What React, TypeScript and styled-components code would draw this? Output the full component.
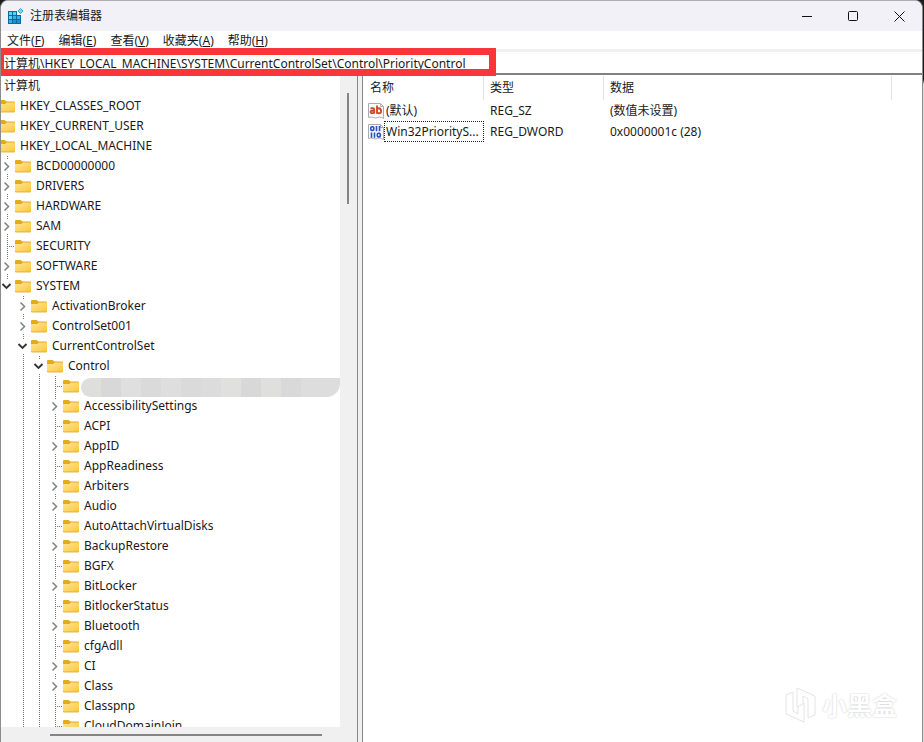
import React from "react";
import styled, { createGlobalStyle, css } from "styled-components";

const GlobalStyle = createGlobalStyle`
  * { box-sizing: border-box; }
  html, body { margin: 0; padding: 0; }
  body {
    background: linear-gradient(#1c1c1c 0 80px, #dcdcdc 84px);
    color: #1a1a1a;
    font-family: "Noto Sans", "Noto Sans CJK SC", sans-serif;
    font-size: 12px;
    line-height: 20px;
  }
  button, input { font: inherit; color: inherit; }
`;

const Window = styled.main`
  display: flex;
  flex-direction: column;
  height: 100vh;
  margin-right: 1px;
  overflow: hidden;
  background: #fff;
  border: 1px solid #8c8c8c;
  border-top-color: #b0aeb4;
  border-bottom: 0;
  border-radius: 8px 8px 0 0;
`;

const TitleBar = styled.header`
  display: flex;
  align-items: center;
  flex: 0 0 30px;
  padding-left: 6px;
  background: #f1f1f7;
`;

const Title = styled.h1`
  flex: 1;
  margin: 0 0 0 6px;
  font-size: 12px;
  font-weight: 400;
`;

const CaptionButton = styled.button`
  display: grid;
  place-items: center;
  width: 46px;
  height: 30px;
  padding: 0;
  border: 0;
  background: none;
`;

const MenuBar = styled.nav`
  display: flex;
  flex: 0 0 18px;
  min-height: 0;
  gap: 14px;
  padding-left: 6px;
`;

const MenuButton = styled.button`
  padding: 0;
  border: 0;
  background: none;
  line-height: 20px;
  white-space: nowrap;
`;

const AddressBar = styled.div`
  position: relative;
  flex: 0 0 26px;
  border-top: 3px solid #f0f0f0;
  border-bottom: 2px solid #828282;
`;

const AddressInput = styled.input`
  display: block;
  width: 100%;
  height: 21px;
  padding: 1px 3px 0;
  border: 0;
  outline: 0;
  background: #fff;
`;

const Highlight = styled.div`
  position: absolute;
  top: -4px;
  left: -4px;
  width: 499px;
  height: 28px;
  border: 7px solid #fa3638;
  pointer-events: none;
`;

const Panes = styled.div`
  display: grid;
  grid-template-columns: minmax(0, 356fr) 6px minmax(0, 559fr);
  flex: 1;
  min-height: 0;
`;

const TreePane = styled.section`
  display: grid;
  grid-template-columns: minmax(0, 1fr) 17px;
  grid-template-rows: minmax(0, 1fr) 15px;
  min-height: 0;
  background: #f0f0f0;
`;

const Tree = styled.ul`
  margin: 0;
  padding: 1px 0 0;
  overflow: hidden;
  list-style: none;
  background: #fff;
`;

const TreeRow = styled.li`
  display: flex;
  height: 20px;
  margin-left: -2px;
`;

const dots = css`
  background-image: repeating-linear-gradient(#777 0 1px, transparent 1px 2px);
  background-size: 1px 100%;
  background-position: 8px 0;
  background-repeat: no-repeat;
`;

const Guide = styled.span<{ $line?: boolean }>`
  flex: 0 0 16px;
  ${(p) => p.$line && dots}
`;

const Branch = styled(Guide)`
  display: flex;
  align-items: center;
  justify-content: flex-end;

  &::after {
    content: "";
    width: 7px;
    height: 1px;
    background: repeating-linear-gradient(90deg, transparent 0 1px, #777 1px 2px);
  }
`;

const Expander = styled.button<{ $last?: boolean }>`
  flex: 0 0 16px;
  display: flex;
  align-items: center;
  padding: 0;
  border: 0;
  background-color: transparent;
  ${dots}
  ${(p) => p.$last && css`background-size: 1px 50%;`}

  svg { background: #fff; }
`;

const NodeLabel = styled.span`
  margin-left: 5px;
  white-space: nowrap;
`;

const Redaction = styled.span`
  flex: 1;
  height: 19px;
  margin: 2px 0 0 2px;
  border-radius: 10px 0 14px 10px;
  background: linear-gradient(
    90deg,
    #dededd 0 20px, #d8d8d8 20px 40px, #dfdfdf 40px 60px, #dadada 60px 80px,
    #dedede 80px 100px, #dadada 100px 120px, #dcdcdc 120px 140px,
    #e0e0df 140px 160px, #d8d8d8 160px 180px, #dfdfde 180px 200px,
    #d9d9d9 200px 220px, #dddddd 220px
  );
`;

const VerticalScroll = styled.div`
  padding: 18px 0 0 7px;

  &::after {
    content: "";
    display: block;
    width: 2px;
    height: 111px;
    background: #858585;
  }
`;

const HorizontalScroll = styled.div`
  grid-column: 1 / -1;
  padding: 7px 35px 0 49px;

  &::after {
    content: "";
    display: block;
    height: 2px;
    background: #858585;
  }
`;

const Splitter = styled.div`
  border: solid #868686;
  border-width: 0 1px;
  background: #f0f0f0;
`;

const ListPane = styled.section`
  position: relative;
  min-width: 0;
  padding-top: 1px;
  overflow: hidden;
`;

const ValueTable = styled.table`
  width: 529px;
  border-spacing: 0;
  table-layout: fixed;
`;

const HeadCell = styled.th<{ $width: number }>`
  width: ${(p) => p.$width}px;
  height: 24px;
  padding: 0 6px;
  border-right: 1px solid #e2e2e2;
  font-weight: 400;
  text-align: left;

  &:first-child { padding-left: 7px; }
`;

const Cell = styled.td`
  height: 21px;
  padding: 0 6px;
  line-height: 21px;
  white-space: nowrap;
`;

const NameCell = styled(Cell)`
  padding: 0 0 0 5px;
`;

const ValueName = styled.div`
  display: flex;
  align-items: center;
`;

const ValueLabel = styled.span<{ $focused?: boolean }>`
  height: 21px;
  padding: 0 1px;
  line-height: 19px;
  border: 1px ${(p) => (p.$focused ? "dotted #222" : "solid transparent")};
  ${(p) => p.$focused && css`flex: 1;`}
`;

const Watermark = styled.div`
  position: absolute;
  right: 25px;
  bottom: 17px;
  display: flex;
  align-items: center;
  gap: 6px;
  color: #fff;
  font-size: 25px;
  font-weight: 700;
  line-height: 40px;
  text-shadow: 0 0 2px #c4c4c4;
`;

function AppIcon() {
  return (
    <svg width="17" height="17" viewBox="0 0 17 17" aria-hidden="true">
      <path d="M1 3h9v4h4v9H1z" fill="#0b6a9c" />
      <path d="M2 4h3v3H2zM6 4h3v3H6zM2 8h3v3H2z" fill="#58d2f5" />
      <path d="M6 8h3v3H6zM10 8h3v3h-3zM2 12h3v3H2z" fill="#2fb2e8" />
      <path d="M6 12h3v3H6zM10 12h3v3h-3z" fill="#1b8fd0" />
      <path d="M13.500 0.500 16 3 13.500 5.500 11 3z" fill="#7fd4f0" stroke="#2387b5" strokeWidth="0.800" />
    </svg>
  );
}

function FolderIcon() {
  return (
    <svg width="16" height="20" viewBox="0 0 16 20" aria-hidden="true">
      <defs>
        <linearGradient id="folder" x1="0" y1="0" x2="1" y2="1">
          <stop offset="0" stopColor="#ffe596" />
          <stop offset="1" stopColor="#fcc63d" />
        </linearGradient>
      </defs>
      <path d="M0 5q0-1 1-1h4.500l2 1.500H15q1 0 1 1V10H0z" fill="#e3aa1e" />
      <path d="M0 8h6l2-1.500h7.500q.5 0 .5.500v8q0 1-1 1H1q-1 0-1-1z" fill="url(#folder)" />
      <path d="M0 15q0 1 1 1h14q1 0 1-1" fill="none" stroke="#dda52c" strokeWidth="0.800" />
    </svg>
  );
}

function Chevron({ open }: { open: boolean }) {
  return (
    <svg width="13" height="14" viewBox="0 0 13 14" fill="none" aria-hidden="true">
      {open ? (
        <path d="M3.500 5 7.500 9l4-4" stroke="#333" strokeWidth="1.800" />
      ) : (
        <path d="M5.500 3.500 9.500 7.500l-4 4" stroke="#858585" strokeWidth="1.600" />
      )}
    </svg>
  );
}

function ValueIcon({ binary }: { binary?: boolean }) {
  return (
    <svg width="16" height="16" viewBox="0 0 16 16" fill="none" aria-hidden="true">
      <path d="M.5.5h12l3 3v12l-2-1q-2-1-4 0t-4 0-5 0z" fill="#fbfbfb" stroke="#a9adb3" />
      <path d="M12.500.5v3h3" stroke="#a9adb3" />
      {binary ? (
        <g stroke="#2a4fc4" strokeWidth="1.600">
          <rect x="2.800" y="2.800" width="3" height="3.600" rx="1.200" />
          <path d="M8.500 2v5.200M11.500 2v5.200M3.500 8.500v5.200M6.500 8.500v5.200" />
          <rect x="9.300" y="9.300" width="3" height="3.600" rx="1.200" />
        </g>
      ) : (
        <g stroke="#cf4a2c" strokeWidth="1.900">
          <path d="M2.500 5.200h2.200q1.500 0 1.500 1.500v4M6.200 7.800H4Q2.500 7.800 2.500 9T4 10.200q1.500 0 2.200-1" />
          <path d="M9 2.500v8.200M9 6.500q.5-1.300 2-1.300t2 2.500-2 2.500T9 9" />
        </g>
      )}
    </svg>
  );
}

function WatermarkLogo() {
  const hook = "M1 8l7-3v19l5 3v-8l6-3v19L1 27z";
  return (
    <svg width="31" height="37" viewBox="0 0 31 37" fill="#fff" stroke="#e4e4e4" aria-hidden="true">
      <path d={hook} />
      <path d={hook} transform="rotate(180 15.500 18)" />
    </svg>
  );
}

type Kind = "leaf" | "closed" | "open" | "root";
type TreeNode = { name: string; level: number; kind: Kind };

const at = (level: number, kind: Kind, ...names: string[]): TreeNode[] =>
  names.map((name) => ({ name, level, kind }));

const nodes: TreeNode[] = [
  ...at(0, "root", "计算机"),
  ...at(1, "root", "HKEY_CLASSES_ROOT", "HKEY_CURRENT_USER", "HKEY_LOCAL_MACHINE"),
  ...at(2, "closed", "BCD00000000", "DRIVERS", "HARDWARE", "SAM"),
  ...at(2, "leaf", "SECURITY"),
  ...at(2, "closed", "SOFTWARE"),
  ...at(2, "open", "SYSTEM"),
  ...at(3, "closed", "ActivationBroker", "ControlSet001"),
  ...at(3, "open", "CurrentControlSet"),
  ...at(4, "open", "Control"),
  ...at(5, "leaf", ""),
  ...at(5, "closed", "AccessibilitySettings"),
  ...at(5, "leaf", "ACPI"),
  ...at(5, "closed", "AppID"),
  ...at(5, "leaf", "AppReadiness"),
  ...at(5, "closed", "Arbiters", "Audio"),
  ...at(5, "leaf", "AutoAttachVirtualDisks"),
  ...at(5, "closed", "BackupRestore"),
  ...at(5, "leaf", "BGFX"),
  ...at(5, "closed", "BitLocker"),
  ...at(5, "leaf", "BitlockerStatus"),
  ...at(5, "closed", "Bluetooth"),
  ...at(5, "leaf", "cfgAdll"),
  ...at(5, "closed", "CI", "Class"),
  ...at(5, "leaf", "Classpnp", "CloudDomainJoin"),
];

function Node({ name, level, kind }: TreeNode) {
  return (
    <TreeRow role="treeitem" aria-level={level + 1}>
      {Array.from({ length: Math.max(0, level - 2) }, (_, i) => (
        <Guide key={i} $line={i > 0} />
      ))}
      {kind === "leaf" && <Branch $line />}
      {(kind === "closed" || kind === "open") && (
        <Expander $last={name === "SYSTEM"} aria-label={name}>
          <Chevron open={kind === "open"} />
        </Expander>
      )}
      {level > 0 && <FolderIcon />}
      {name ? <NodeLabel>{name}</NodeLabel> : <Redaction />}
    </TreeRow>
  );
}

const menus = [
  ["文件", "F"],
  ["编辑", "E"],
  ["查看", "V"],
  ["收藏夹", "A"],
  ["帮助", "H"],
];

export default function App() {
  return (
    <>
      <GlobalStyle />
      <Window>
        <TitleBar>
          <AppIcon />
          <Title>注册表编辑器</Title>
          <CaptionButton aria-label="最小化">
            <svg width="11" height="11"><path d="M0 5.500h10" stroke="#111" /></svg>
          </CaptionButton>
          <CaptionButton aria-label="最大化">
            <svg width="11" height="11"><rect x=".5" y=".5" width="9" height="9" rx="1" fill="none" stroke="#111" /></svg>
          </CaptionButton>
          <CaptionButton aria-label="关闭">
            <svg width="11" height="11"><path d="M.5.5l10 10M10.500.5l-10 10" stroke="#111" /></svg>
          </CaptionButton>
        </TitleBar>
        <MenuBar>
          {menus.map(([label, key]) => (
            <MenuButton key={key}>{label}(<u>{key}</u>)</MenuButton>
          ))}
        </MenuBar>
        <AddressBar>
          <AddressInput
            aria-label="地址"
            defaultValue="计算机\HKEY_LOCAL_MACHINE\SYSTEM\CurrentControlSet\Control\PriorityControl"
          />
          <Highlight />
        </AddressBar>
        <Panes>
          <TreePane>
            <Tree role="tree">
              {nodes.map((node, i) => <Node key={i} {...node} />)}
            </Tree>
            <VerticalScroll />
            <HorizontalScroll />
          </TreePane>
          <Splitter />
          <ListPane>
            <ValueTable>
              <thead>
                <tr>
                  <HeadCell $width={121}>名称</HeadCell>
                  <HeadCell $width={120}>类型</HeadCell>
                  <HeadCell $width={288}>数据</HeadCell>
                </tr>
              </thead>
              <tbody>
                <tr>
                  <NameCell><ValueName><ValueIcon /><ValueLabel>(默认)</ValueLabel></ValueName></NameCell>
                  <Cell>REG_SZ</Cell>
                  <Cell>(数值未设置)</Cell>
                </tr>
                <tr>
                  <NameCell><ValueName><ValueIcon binary /><ValueLabel $focused>Win32PriorityS...</ValueLabel></ValueName></NameCell>
                  <Cell>REG_DWORD</Cell>
                  <Cell>0x0000001c (28)</Cell>
                </tr>
              </tbody>
            </ValueTable>
            <Watermark>
              <WatermarkLogo />
              小黑盒
            </Watermark>
          </ListPane>
        </Panes>
      </Window>
    </>
  );
}
